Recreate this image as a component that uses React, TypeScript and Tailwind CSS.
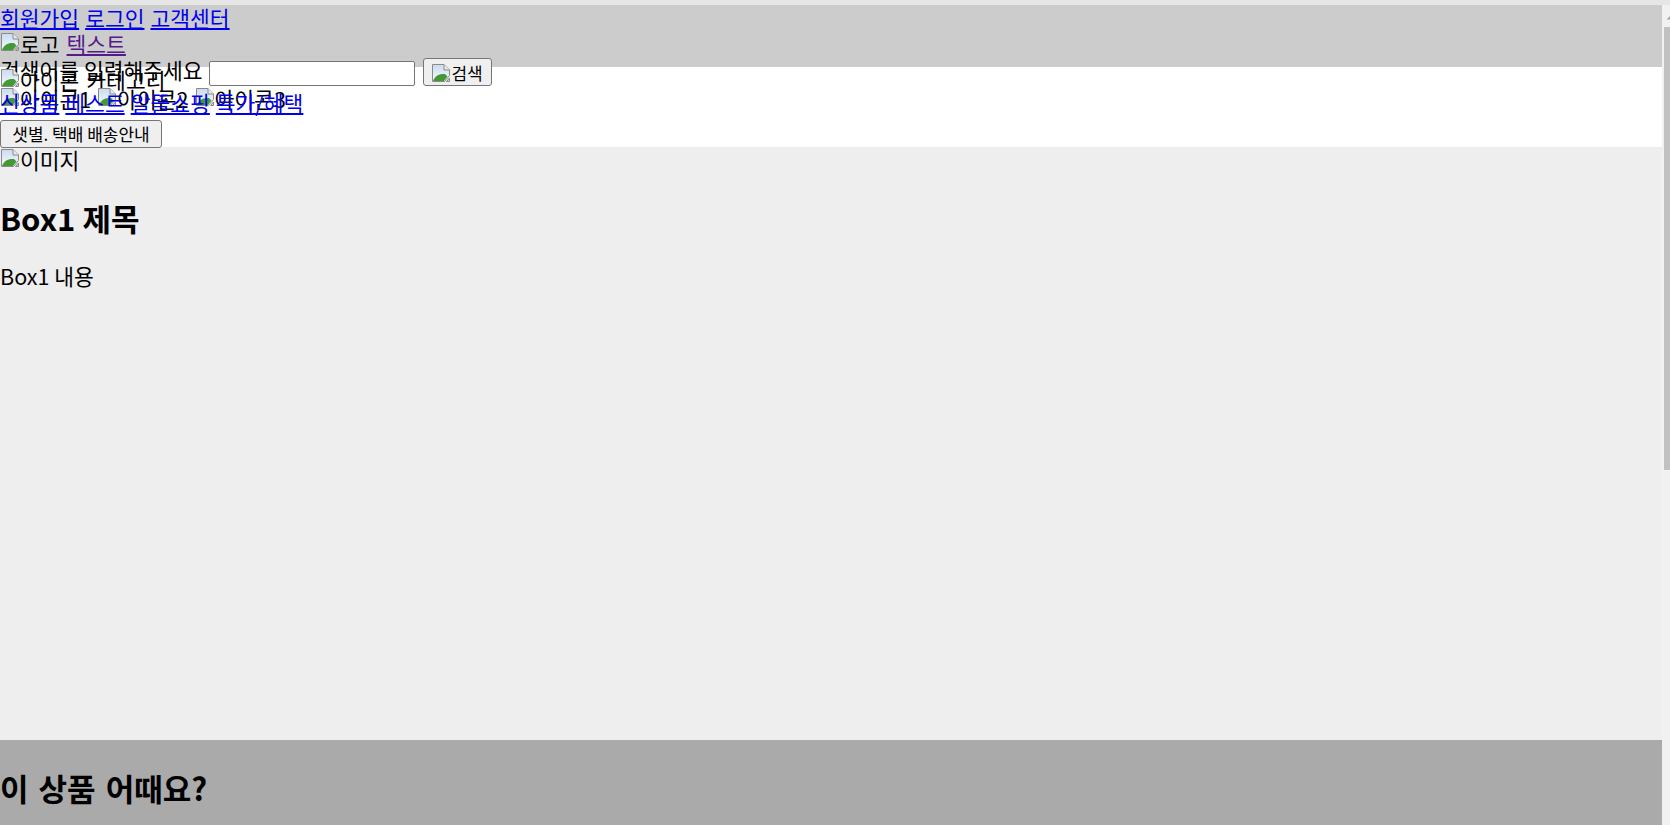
// Shop landing page draft: header, category nav, main box and recommendation section

function BrokenImage() {
  return (
    <svg width="20" height="20" viewBox="0 0 20 20" className="shrink-0 mt-[1px]">
      <defs>
        <linearGradient id="img-sky" x1="0" y1="0" x2="0" y2="1">
          <stop offset="0" stopColor="#c9dcf0" />
          <stop offset="1" stopColor="#f7fafd" />
        </linearGradient>
      </defs>
      <path d="M1.5 1.5H13L18.5 7V12.5L13.5 18.5H1.5Z" fill="url(#img-sky)" stroke="#8a8a8a" />
      <path d="M13 1.5V7H18.5" fill="#e9e9e9" stroke="#8a8a8a" strokeLinejoin="round" />
      <path d="M2 18C4 12.5 8 10.5 14 11L16.5 13.5L13 18Z" fill="#439a35" />
      <path d="M15.5 18.5L18.5 15V18.5Z" fill="#d4d4d4" stroke="#8a8a8a" />
    </svg>
  );
}

function Img({ alt }: { alt: string }) {
  return (
    <span className="flex items-start">
      <BrokenImage />
      <span>{alt}</span>
    </span>
  );
}

const topLinks = ['회원가입', '로그인', '고객센터'];
const menuLinks = ['신상품', '베스트', '알뜰쇼핑', '특가/혜택'];

function Header() {
  return (
    <header className="h-[62px] bg-[#cccccc]">
      <div className="flex h-[26px] gap-[6px]">
        {topLinks.map((t) => (
          <a key={t} href="#" className="text-[#0000ee] underline underline-offset-[1px]">
            {t}
          </a>
        ))}
      </div>
      <div className="flex h-[26px] gap-[7px]">
        <Img alt="로고" />
        <a href="#" className="text-[#551a8b] underline underline-offset-[1px]">
          텍스트
        </a>
      </div>
      <form className="flex items-start h-[26px]">
        <label htmlFor="q">검색어를 입력해주세요</label>
        <input
          id="q"
          type="text"
          className="ml-[6px] mt-[4px] w-[206px] h-[25px] bg-white border border-[#767676] rounded-[2px]"
        />
        <button
          type="button"
          className="ml-[8px] mt-[1px] w-[69px] h-[28px] flex items-center justify-center bg-[#efefef] border border-[#767676] rounded-[3px] text-[17px] leading-[20px]"
        >
          <BrokenImage />
          <span className="mt-[1px]">검색</span>
        </button>
      </form>
    </header>
  );
}

function Nav() {
  return (
    <nav className="h-[80px] bg-white">
      <div className="flex h-[19px] gap-[7px]">
        <Img alt="아이콘" />
        <span>카테고리</span>
      </div>
      <div className="flex h-[4px] gap-[6px]">
        <Img alt="아이콘1" />
        <Img alt="아이콘2" />
        <Img alt="아이콘3" />
      </div>
      <div className="flex h-[26px] gap-[6px]">
        {menuLinks.map((t) => (
          <a key={t} href="#" className="text-[#0000ee] underline underline-offset-[1px]">
            {t}
          </a>
        ))}
      </div>
      <div className="pt-[3px]">
        <button
          type="button"
          className="w-[162px] h-[28px] bg-[#efefef] border border-[#767676] rounded-[3px] text-[17px] leading-[20px]"
        >
          샛별. 택배 배송안내
        </button>
      </div>
    </nav>
  );
}

function Scrollbar() {
  return (
    <div className="w-[8px] bg-[#f1f1f1] pt-[10px]">
      <svg width="8" height="5" viewBox="0 0 8 5">
        <path d="M4.5 4.5L8.5 0.5L12.5 4.5Z" fill="#a3a3a3" />
      </svg>
      <div className="mt-[7px] ml-[2px] h-[443px] bg-[#c1c1c1]" />
    </div>
  );
}

export default function App() {
  return (
    <div className="h-[825px] overflow-hidden flex flex-col font-['Noto_Sans_CJK_KR',sans-serif] text-[21.5px] leading-[26px] text-black">
      <div className="h-[5px] shrink-0 bg-[#e6e6e6]" />
      <div className="flex flex-1 min-h-0">
        <div className="w-[1662px]">
          <Header />
          <Nav />
          <section className="h-[593px] bg-[#eeeeee]">
            <div className="flex h-[26px]">
              <Img alt="이미지" />
            </div>
            <h2 className="mt-[25px] text-[31px] leading-[40px] font-bold">Box1 제목</h2>
            <p className="mt-[25px]">Box1 내용</p>
          </section>
          <section className="h-[300px] pt-[28px] bg-[#aaaaaa]">
            <h2 className="text-[31px] leading-[40px] font-bold [word-spacing:3px]">이 상품 어때요?</h2>
          </section>
        </div>
        <Scrollbar />
      </div>
    </div>
  );
}
